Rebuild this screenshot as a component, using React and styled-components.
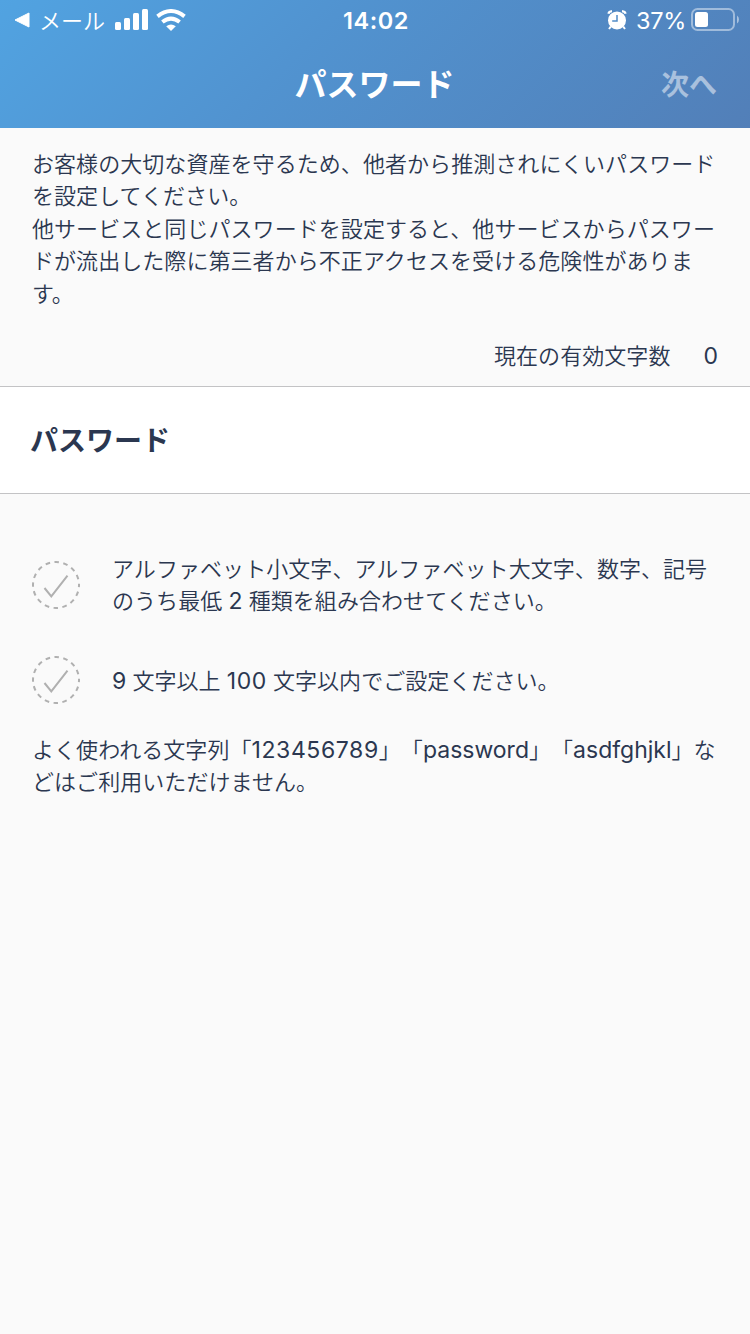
import React from 'react'
import styled, { createGlobalStyle } from 'styled-components'

const GlobalStyle = createGlobalStyle`
  * {
    box-sizing: border-box;
  }
  body {
    margin: 0;
    background: #fafafa;
    font-family: 'Noto Sans CJK JP', sans-serif;
    text-spacing-trim: space-all;
  }
`

const Screen = styled.div`
  width: 750px;
  height: 1334px;
  overflow: hidden;
  background: #fafafa;
  color: #2b3750;
`

const Header = styled.header`
  height: 128px;
  color: white;
  background: linear-gradient(135deg, #51a3e1 0%, #5193d0 40%, #527fb8 100%);
`

const StatusBar = styled.div`
  display: grid;
  grid-template-columns: 1fr auto 1fr;
  align-items: center;
  height: 40px;
  padding: 0 11px 0 14px;
`

const StatusLeft = styled.div`
  display: flex;
  align-items: center;
`

const StatusRight = styled(StatusLeft)`
  justify-content: flex-end;
`

const BackApp = styled.span`
  margin: 0 10px 0 8px;
  padding-bottom: 2px;
  font-size: 22px;
  line-height: 38px;
  font-weight: 350;
`

const Clock = styled.span`
  margin-right: 1px;
  font-family: Inter, sans-serif;
  font-size: 23.5px;
  font-weight: 600;
  letter-spacing: 0.6px;
`

const Percent = styled.span`
  margin: 0 5px 0 9px;
  font-family: Inter, sans-serif;
  font-size: 23.5px;
  letter-spacing: -0.3px;
`

const NavBar = styled.nav`
  display: grid;
  grid-template-columns: 1fr auto 1fr;
  align-items: center;
  height: 88px;
  padding: 0 33px 4px 32px;
`

const Title = styled.h1`
  grid-column: 2;
  margin: 0;
  font-size: 32px;
  line-height: 48px;
  font-weight: 700;
`

const Next = styled.span`
  justify-self: end;
  padding-top: 2px;
  font-size: 28px;
  line-height: 46px;
  font-weight: 700;
  opacity: 0.5;
`

const Intro = styled.section`
  height: 258px;
  padding: 17.5px 32px 0;
`

const Line = styled.div`
  height: ${props => props.$height || 32}px;
  font-size: 22px;
  line-height: 32px;
  font-weight: 350;
  letter-spacing: 0.06px;
  word-spacing: 1.2px;
  white-space: nowrap;
`

const Latin = styled.span`
  font-family: Inter, sans-serif;
  font-size: 23px;
  line-height: 1;
  font-weight: 400;
  letter-spacing: ${props => props.$spacing || 0}px;
`

const Counter = styled.div`
  display: flex;
  justify-content: flex-end;
  gap: 33px;
  margin-top: 29.5px;
`

const Field = styled.div`
  display: flex;
  align-items: center;
  height: 108px;
  padding: 0 30px 2px;
  background: white;
  border-top: 1px solid #c3c3c5;
  border-bottom: 1px solid #c3c3c5;
`

const FieldLabel = styled.label`
  font-size: 28px;
  line-height: 40px;
  font-weight: 700;
`

const Rules = styled.section`
  padding: 59px 32px 0;
`

const Rule = styled.div`
  display: flex;
  align-items: center;
  gap: 32px;
  height: ${props => props.$height}px;
  margin-bottom: ${props => props.$gap}px;
`

const RuleText = styled.div`
  padding-bottom: ${props => props.$lift}px;
`

const Check = () => (
  <svg width="48" height="48" viewBox="0 0 48 48" fill="none" stroke="#b0b0b0" strokeWidth="2">
    <circle cx="24" cy="24" r="23" strokeDasharray="4.6 4.4323" strokeDashoffset="2.3" />
    <path d="M12.5 27L19.3 35.4L35.5 14.6" />
  </svg>
)

const Signal = () => (
  <svg width="34" height="22" viewBox="0 0 34 22" fill="white">
    <rect x="0" y="13" width="6" height="8" rx="1.5" />
    <rect x="9" y="9" width="6" height="12" rx="1.5" />
    <rect x="18" y="4" width="6" height="17" rx="1.5" />
    <rect x="27" y="0" width="6" height="21" rx="1.5" />
  </svg>
)

const WifiSvg = styled.svg`
  margin-left: 7px;
`

const Wifi = () => (
  <WifiSvg width="30" height="22" viewBox="0 0 30 22" fill="none" stroke="white" strokeWidth="4">
    <path d="M1.5 7.4Q15 -3.3 28.5 7.4" />
    <path d="M6.4 13Q15 6.2 23.6 13" />
    <path d="M15 22L10.2 17.3Q15 13.5 19.8 17.3Z" fill="white" stroke="none" />
  </WifiSvg>
)

const Alarm = () => (
  <svg width="20" height="20" viewBox="0 0 20 20" fill="none">
    <circle cx="10" cy="10.4" r="9" fill="white" />
    <path d="M1.4 3.8Q2 1.6 5 1.2M18.6 3.8Q18 1.6 15 1.2" stroke="white" strokeWidth="2.2" />
    <path d="M3.8 16.5L2 19M16.2 16.5L18 19" stroke="white" strokeWidth="2" />
    <path d="M10 5V11H5.2" stroke="#518cc7" strokeWidth="1.5" />
  </svg>
)

const Battery = () => (
  <svg width="48" height="24" viewBox="0 0 48 24" fill="none">
    <rect x="1" y="1" width="42" height="21" rx="5.5" stroke="white" strokeOpacity="0.45" strokeWidth="2" />
    <rect x="4" y="4" width="13" height="15" rx="2.5" fill="white" />
    <path d="M46 7.5Q48 9 48 11.5T46 15.5Z" fill="white" fillOpacity="0.5" />
  </svg>
)

const App = () => (
  <>
    <GlobalStyle />
    <Screen>
      <Header>
        <StatusBar>
          <StatusLeft>
            <svg width="17" height="16" viewBox="0 0 17 16">
              <path d="M1 8L15 1V15Z" fill="white" stroke="white" strokeLinejoin="round" />
            </svg>
            <BackApp>メール</BackApp>
            <Signal />
            <Wifi />
          </StatusLeft>
          <Clock>14:02</Clock>
          <StatusRight>
            <Alarm />
            <Percent>37%</Percent>
            <Battery />
          </StatusRight>
        </StatusBar>
        <NavBar>
          <Title>パスワード</Title>
          <Next>次へ</Next>
        </NavBar>
      </Header>
      <Intro>
        <Line $height={32.5}>お客様の大切な資産を守るため、他者から推測されにくいパスワード</Line>
        <Line $height={32.5}>を設定してください。</Line>
        <Line $height={32.5}>他サービスと同じパスワードを設定すると、他サービスからパスワー</Line>
        <Line $height={32.5}>ドが流出した際に第三者から不正アクセスを受ける危険性がありま</Line>
        <Line $height={32.5}>す。</Line>
        <Counter>
          <Line>現在の有効文字数</Line>
          <Line><Latin>0</Latin></Line>
        </Counter>
      </Intro>
      <Field>
        <FieldLabel>パスワード</FieldLabel>
      </Field>
      <Rules>
        <Rule $height={64} $gap={47}>
          <Check />
          <RuleText $lift={4}>
            <Line>アルファベット小文字、アルファベット大文字、数字、記号</Line>
            <Line>のうち最低 <Latin>2</Latin> 種類を組み合わせてください。</Line>
          </RuleText>
        </Rule>
        <Rule $height={32} $gap={36}>
          <Check />
          <RuleText $lift={2}>
            <Line><Latin>9</Latin> 文字以上 <Latin $spacing={0.5}>100</Latin> 文字以内でご設定ください。</Line>
          </RuleText>
        </Rule>
        <Line>よく使われる文字列「<Latin $spacing={0.6}>123456789</Latin>」「<Latin>password</Latin>」「<Latin>asdfghjkl</Latin>」な</Line>
        <Line>どはご利用いただけません。</Line>
      </Rules>
    </Screen>
  </>
)

export default App
